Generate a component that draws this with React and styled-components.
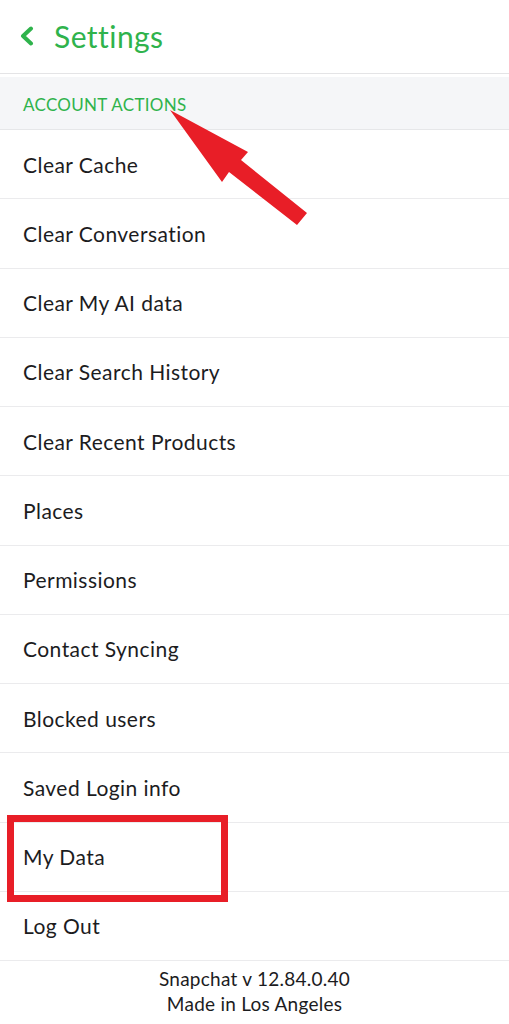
import React from "react";
import styled, { createGlobalStyle } from "styled-components";

const Global = createGlobalStyle`
  html, body { margin: 0; padding: 0; background: #fff; }
  body { font-family: Lato, "Open Sans", sans-serif; -webkit-font-smoothing: antialiased; }
  * { box-sizing: border-box; }
`;

const GREEN = "#2fb34c";
const TEXT = "#1c1c1e";

const Page = styled.div`
  position: relative;
  width: 509px;
  height: 1024px;
  overflow: hidden;
  background: #fff;
`;

const Header = styled.header`
  height: 74px;
  display: flex;
  align-items: center;
  padding: 0 0 2px 19px;
  gap: 19px;
  border-bottom: 1px solid #e4e4e6;
`;

const BackIcon = styled.svg`
  width: 16px;
  height: 20px;
  flex: none;
`;

const Title = styled.h1`
  margin: 0;
  font-size: 30px;
  font-weight: 400;
  color: ${GREEN};
  letter-spacing: 0.45px;
`;

const SectionHeader = styled.div`
  margin-top: 3px;
  height: 53px;
  display: flex;
  align-items: center;
  padding: 2px 23px 0;
  background: #f5f6f8;
  border-bottom: 1px solid #e6e7e9;
  color: ${GREEN};
  font-size: 17px;
  letter-spacing: 0.3px;
`;

const List = styled.ul`
  list-style: none;
  margin: 0;
  padding: 0;
`;

const Row = styled.li`
  height: 69.25px;
  display: flex;
  align-items: center;
  padding: 0 23px;
  border-bottom: 1px solid #ebebed;
  color: ${TEXT};
  font-size: 21px;
  letter-spacing: 0.45px;
`;

const Footer = styled.footer`
  padding-top: 5px;
  text-align: center;
  color: ${TEXT};
  font-size: 19px;
  line-height: 25px;
  letter-spacing: 0.25px;
`;

const Overlay = styled.svg`
  position: absolute;
  inset: 0;
  width: 509px;
  height: 1024px;
  pointer-events: none;
`;

const items = [
  "Clear Cache",
  "Clear Conversation",
  "Clear My AI data",
  "Clear Search History",
  "Clear Recent Products",
  "Places",
  "Permissions",
  "Contact Syncing",
  "Blocked users",
  "Saved Login info",
  "My Data",
  "Log Out",
];

export default function App() {
  return (
    <Page>
      <Global />
      <Header>
        <BackIcon viewBox="0 0 16 20">
          <path
            d="M12 2.5 L4 10 L12 17.5"
            fill="none"
            stroke={GREEN}
            strokeWidth="4"
            strokeLinecap="round"
            strokeLinejoin="round"
          />
        </BackIcon>
        <Title>Settings</Title>
      </Header>
      <SectionHeader>ACCOUNT ACTIONS</SectionHeader>
      <List>
        {items.map((t) => (
          <Row key={t}>{t}</Row>
        ))}
      </List>
      <Footer>
        <div>Snapchat v 12.84.0.40</div>
        <div>Made in Los Angeles</div>
      </Footer>
      <Overlay viewBox="0 0 509 1024">
        <polygon
          points="170,110 248,152 241,160 307,213 297,225 229,172 222,182"
          fill="#e81e27"
        />
        <rect
          x="10.5"
          y="818.5"
          width="214"
          height="80"
          fill="none"
          stroke="#e81e27"
          strokeWidth="7"
        />
      </Overlay>
    </Page>
  );
}
